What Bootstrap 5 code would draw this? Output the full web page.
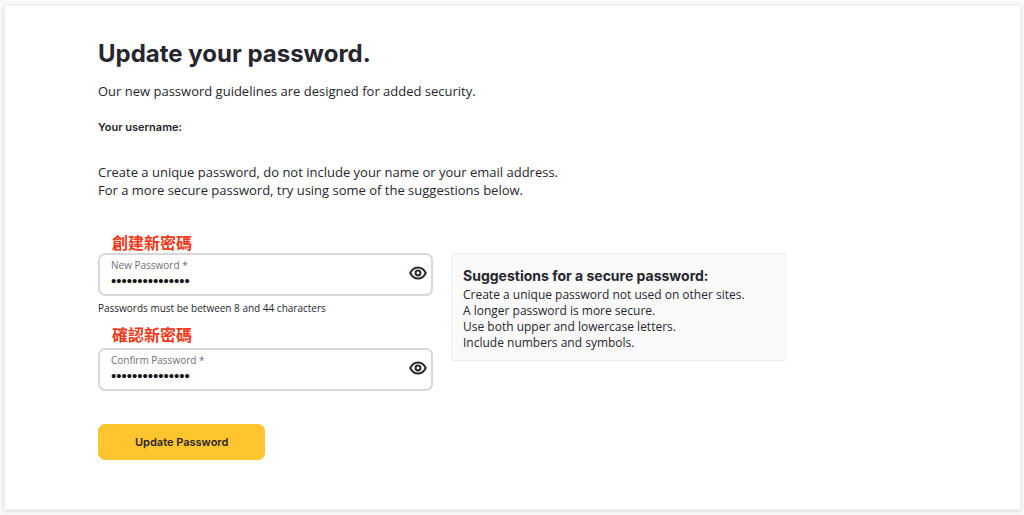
<!DOCTYPE html>
<html lang="en">
<head>
<meta charset="utf-8">
<meta name="viewport" content="width=device-width, initial-scale=1">
<title>Update your password</title>
<link href="https://cdn.jsdelivr.net/npm/bootstrap@5.3.0/dist/css/bootstrap.min.css" rel="stylesheet">
<style>
body{background:#f9f9f9;color:#27262e;font:13px/18px "Open Sans",Inter,"Noto Sans CJK TC",sans-serif;padding:5px 3px 5px 4px}
.panel{background:#fff;border:1px solid #f1f1f1;box-shadow:0 1px 4px rgba(0,0,0,.14);padding:32px 93px 49px}
.page-title{font-family:Inter,sans-serif;font-size:24px;line-height:32px;font-weight:700;margin-bottom:12px}
.username{font-family:Inter,sans-serif;font-size:11px;font-weight:600;line-height:18px;margin:18px 0 27px}
.form-area{max-width:688px;margin-top:34px}
.fields-row{--bs-gutter-x:18px}
.note-zh{color:#f03a1c;font:700 16px/18px "Noto Sans CJK TC",sans-serif;padding-left:14px;margin-bottom:2px}
.field{border:2px solid #d8d8d8;border-radius:7px;height:43px;padding:0 4px 3px 11px}
.field label{font-size:10px;line-height:15px;color:#6f6f74}
.field input{border:0;outline:0;padding:0;height:15px;font:15px/15px "Liberation Sans",sans-serif;color:#111;background:transparent}
.eye{border:0;background:none;padding:0;line-height:0;color:#27262e}
.hint{font-size:10px;line-height:16px;margin:4px 0 9px}
.note-second{margin-bottom:5px}
.tips{background:#fafafb;border:1px solid #ececee;border-radius:2px;padding:13px 11px 9px;margin-top:20px}
.tips h2{font-family:Inter,sans-serif;font-size:14px;line-height:18px;font-weight:700;margin:0 0 2px}
.tips li{font-size:12px;line-height:16px}
.btn-update{--bs-btn-bg:#ffc52f;--bs-btn-border-color:#ffc52f;--bs-btn-hover-bg:#f5b91c;--bs-btn-color:#27262e;font-family:Inter,sans-serif;border-radius:7px;font-size:11px;line-height:16px;font-weight:600;padding:9px 36px;margin-top:33px}
</style>
</head>
<body>
<main class="panel">
  <h1 class="page-title">Update your password.</h1>
  <p class="mb-0">Our new password guidelines are designed for added security.</p>
  <p class="username">Your username:</p>
  <p class="mb-0">Create a unique password, do not include your name or your email address.<br>For a more secure password, try using some of the suggestions below.</p>
  <form class="form-area" onsubmit="return false">
    <div class="row fields-row">
      <div class="col-6">
        <div class="note-zh" lang="zh-Hant">創建新密碼</div>
        <div class="field d-flex align-items-center">
          <div class="d-flex flex-column flex-grow-1">
            <label for="newPw">New Password *</label>
            <input id="newPw" type="password" value="abcdefghijklmno">
          </div>
          <button type="button" class="eye" aria-label="Show new password"><svg width="18" height="14" viewBox="0 0 18 14" fill="none" stroke="currentColor" stroke-width="2"><path d="M1.2 7C3 3.4 5.7 1.5 9 1.5S15 3.4 16.8 7C15 10.6 12.3 12.5 9 12.5S3 10.6 1.2 7Z" stroke-linejoin="round"/><circle cx="9" cy="7" r="2.4"/></svg></button>
        </div>
        <div class="hint">Passwords must be between 8 and 44 characters</div>
        <div class="note-zh note-second" lang="zh-Hant">確認新密碼</div>
        <div class="field d-flex align-items-center">
          <div class="d-flex flex-column flex-grow-1">
            <label for="confirmPw">Confirm Password *</label>
            <input id="confirmPw" type="password" value="abcdefghijklmno">
          </div>
          <button type="button" class="eye" aria-label="Show confirmed password"><svg width="18" height="14" viewBox="0 0 18 14" fill="none" stroke="currentColor" stroke-width="2"><path d="M1.2 7C3 3.4 5.7 1.5 9 1.5S15 3.4 16.8 7C15 10.6 12.3 12.5 9 12.5S3 10.6 1.2 7Z" stroke-linejoin="round"/><circle cx="9" cy="7" r="2.4"/></svg></button>
        </div>
      </div>
      <div class="col-6">
        <section class="tips">
          <h2>Suggestions for a secure password:</h2>
          <ul class="list-unstyled mb-0">
            <li>Create a unique password not used on other sites.</li>
            <li>A longer password is more secure.</li>
            <li>Use both upper and lowercase letters.</li>
            <li>Include numbers and symbols.</li>
          </ul>
        </section>
      </div>
    </div>
    <button type="submit" class="btn btn-update">Update Password</button>
  </form>
</main>
<script src="https://cdn.jsdelivr.net/npm/bootstrap@5.3.0/dist/js/bootstrap.bundle.min.js"></script>
</body>
</html>
